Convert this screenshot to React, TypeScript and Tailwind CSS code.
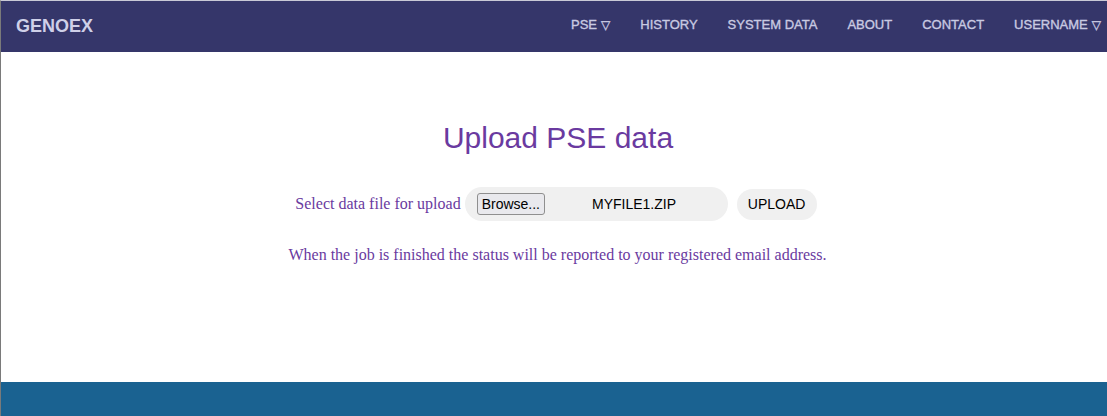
const navItems = [
  { label: "PSE", caret: true },
  { label: "HISTORY" },
  { label: "SYSTEM DATA" },
  { label: "ABOUT" },
  { label: "CONTACT" },
  { label: "USERNAME", caret: true },
];

export default function App() {
  return (
    <div className="flex h-[416px] w-full flex-col border-l border-t border-l-[#7a7a7a] border-t-[#c9c9d6] bg-white font-['Liberation_Sans',Arial,sans-serif]">
      <header className="flex h-[51px] items-center justify-between bg-[#35366a] pl-[15px] pr-[6px]">
        <span className="text-[18px] font-bold text-[#cfd0e8]">GENOEX</span>
        <nav className="flex items-center gap-[30px] pb-[4px]">
          {navItems.map((item) => (
            <a key={item.label} className="text-[13px] text-[#c9cae2] [-webkit-text-stroke:0.35px_#c9cae2]">
              {item.label}
              {item.caret && <span className="ml-[4px] font-['DejaVu_Sans',sans-serif] text-[12px]">▽</span>}
            </a>
          ))}
        </nav>
      </header>

      <main className="flex flex-1 flex-col items-center pl-[4px] pt-[68px]">
        <h1 className="pl-[4px] text-[30px] leading-[36px] text-[#6a3aa0]">Upload PSE data</h1>

        <div className="mt-[31px] flex items-center">
          <span className="mr-[4px] font-['Liberation_Serif','Times_New_Roman',serif] text-[16px] text-[#6a3aa0]">
            Select data file for upload
          </span>
          <div className="flex h-[34px] w-[263px] items-center rounded-full bg-[#f0f0f0] pl-[12px]">
            <button className="h-[22px] rounded-[3px] border border-[#8f8f8f] bg-[#e9e9ed] px-[4px] text-[14px] text-black">
              Browse...
            </button>
            <span className="ml-[47px] text-[14px] text-black">MYFILE1.ZIP</span>
          </div>
          <button className="ml-[9px] h-[31px] w-[80px] rounded-full bg-[#f0f0f0] text-[14px] text-black">
            UPLOAD
          </button>
        </div>

        <p className="mt-[22px] pl-[3px] font-['Liberation_Serif','Times_New_Roman',serif] text-[16px] text-[#6a3aa0]">
          When the job is finished the status will be reported to your registered email address.
        </p>
      </main>

      <footer className="h-[34px] bg-[#1a6291]" />
    </div>
  );
}
